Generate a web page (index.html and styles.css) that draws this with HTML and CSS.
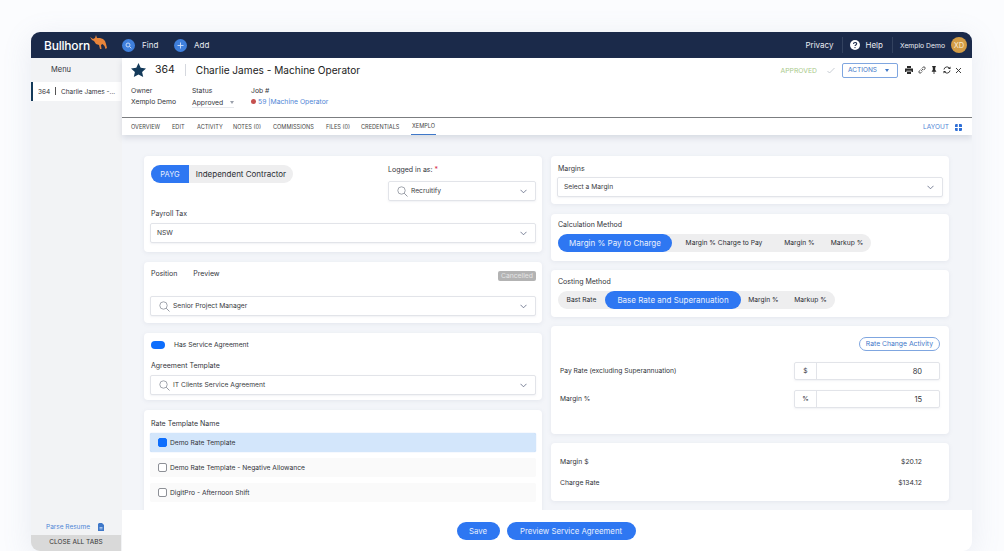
FILE: index.html
```html
<!DOCTYPE html>
<html lang="en">
<head>
    <meta charset="UTF-8">
    <meta name="viewport" content="width=device-width, initial-scale=1.0">
    <title>Charlie James - Machine Operator</title>
    <link rel="stylesheet" href="styles.css">
</head>
<body>
    <div class="window">
        <!-- top bar -->
        <div class="topbar">
            <div class="logo">
                <span>Bullhorn</span>
                <svg width="17" height="15" viewBox="0 0 17 15"><path fill="#e8843a" d="M0 2l3 2 2-1 1-3 1 3 3 0 3 1 2 2 1 3 1 4-1.500 1-1-3-2-2-1.500 1 .5 4-1.500 0-1-4-3-1-2-3-2-1z"/></svg>
            </div>
            <div class="find">
                <span class="round"><svg width="7" height="7" viewBox="0 0 7 7"><circle cx="3" cy="3" r="2" fill="none" stroke="#cfe0fa" stroke-width=".9"/><path d="M4.5 4.5L6.3 6.3" stroke="#cfe0fa" stroke-width=".9"/></svg></span>
                <span>Find</span>
            </div>
            <div class="add">
                <span class="round"><svg width="7" height="7" viewBox="0 0 7 7"><path d="M3.5 .5v6M.5 3.5h6" stroke="#cfe0fa" stroke-width=".9"/></svg></span>
                <span>Add</span>
            </div>
            <div class="topright">
                <span class="privacy">Privacy</span>
                <span class="help">
                    <svg width="10" height="10" viewBox="0 0 10 10"><circle cx="5" cy="5" r="5" fill="#fff"/><path d="M3.5 4c0-2 3.2-2 3.2-.2 0 1.200-1.700 1.100-1.700 2.300" fill="none" stroke="#1b2a4a" stroke-width="1.100"/><circle cx="5" cy="7.600" r=".7" fill="#1b2a4a"/></svg>
                    Help
                </span>
                <span class="user">Xemplo Demo</span>
                <span class="avatar">XD</span>
            </div>
        </div>

        <div class="below">
            <!-- left tabs -->
            <div class="sidebar">
                <div class="menu">Menu</div>
                <div class="opentab">364 <i></i> Charlie James -...</div>
                <div class="parse">
                    Parse Resume
                    <svg width="6" height="8" viewBox="0 0 6 8"><path fill="#3f78c9" d="M0 1l1-1h3l2 2v6H0z"/><path fill="#cfe0fa" d="M1.500 4h3v.7h-3zM1.500 5.500h3v.7h-3z"/></svg>
                </div>
                <div class="closeall">CLOSE ALL TABS</div>
            </div>

            <div class="main">
                <!-- record header -->
                <div class="record">
                    <div class="recordtop">
                        <div class="recordtitle">
                            <svg width="15" height="14" viewBox="0 0 15 14"><path fill="#143a5a" d="M7.500 0l2.200 4.800 5.300.6-3.900 3.500 1.100 5.100-4.700-2.600L2.800 14l1.100-5.100L0 5.400l5.300-.6z"/></svg>
                            <span class="recid">364</span>
                            <span class="recname">Charlie James - Machine Operator</span>
                        </div>
                        <div class="recordactions">
                            <span class="approved">APPROVED</span>
                            <svg class="tick" width="8" height="7" viewBox="0 0 8 7"><path d="M.5 4l2 2L7.500 1" fill="none" stroke="#b9bfc8" stroke-width=".8"/></svg>
                            <span class="actions">ACTIONS <b></b></span>
                            <div class="tools">
                                <svg width="8" height="8" viewBox="0 0 8 8"><path fill="#2a2a2a" d="M2 0h4v2H2zM0 2.500h8v3.500H6.500V4.800h-5V6H0zM2 5.500h4V8H2z"/></svg>
                                <svg width="8" height="8" viewBox="0 0 8 8"><path d="M3.200 4.800L5 3M2.500 3.800L1.200 5.100a1.200 1.200 0 0 0 1.700 1.700L4.200 5.500M3.800 2.500L5.100 1.200a1.200 1.200 0 0 1 1.700 1.700L5.500 4.200" fill="none" stroke="#2a2a2a" stroke-width=".8"/></svg>
                                <svg width="8" height="8" viewBox="0 0 8 8"><path fill="#2a2a2a" d="M2.200 0h3.600v1L5.200 1.500V4l1 1v.7H4.400V8h-.8V5.700H1.800V5l1-1V1.500L2.200 1z"/></svg>
                                <svg width="8" height="8" viewBox="0 0 8 8"><path d="M1 3.500A3 3 0 0 1 6.300 2M7 4.500A3 3 0 0 1 1.700 6" fill="none" stroke="#2a2a2a" stroke-width=".9"/><path fill="#2a2a2a" d="M7.500.5v2.600H4.900zM.5 7.500V4.900h2.600z"/></svg>
                                <svg width="7" height="7" viewBox="0 0 7 7"><path d="M1 1l5 5M6 1L1 6" stroke="#2a2a2a" stroke-width=".9"/></svg>
                            </div>
                        </div>
                    </div>
                    <div class="recordmeta">
                        <div class="meta owner"><span>Owner</span><span>Xemplo Demo</span></div>
                        <div class="meta status"><span>Status</span><span class="statusval">Approved <b></b></span></div>
                        <div class="meta job"><span>Job #</span><span class="joblink"><i></i>59 |Machine Operator</span></div>
                    </div>
                    <div class="tabs">
                        <span class="t1">OVERVIEW</span>
                        <span class="t2">EDIT</span>
                        <span class="t3">ACTIVITY</span>
                        <span class="t4">NOTES (0)</span>
                        <span class="t5">COMMISSIONS</span>
                        <span class="t6">FILES (0)</span>
                        <span class="t7">CREDENTIALS</span>
                        <span class="t8 current">XEMPLO</span>
                        <span class="layout">LAYOUT
                            <svg width="7" height="7" viewBox="0 0 7 7"><path fill="#2f6fd6" d="M0 .8L.8 0h1.900v2.900H0zM4 0h2.200L7 .8v2.100H4zM0 4h2.700v3H.8L0 6.200zM4 4h3v2.200L6.200 7H4z"/></svg>
                        </span>
                    </div>
                </div>

                <!-- form -->
                <div class="formarea">
                    <div class="col left">
                        <div class="card c1">
                            <div class="c1top">
                                <div class="pills big">
                                    <span class="pill on payg">PAYG</span>
                                    <span class="pill">Independent Contractor</span>
                                </div>
                                <div class="loggedin">
                                    <div class="label">Logged in as: <em>*</em></div>
                                    <div class="select">
                                        <svg class="mag" width="11" height="11" viewBox="0 0 11 11"><circle cx="4.500" cy="4.500" r="3.700" fill="none" stroke="#8a8f99" stroke-width=".8"/><path d="M7.200 7.200L10.500 10.500" stroke="#8a8f99" stroke-width=".9"/></svg>
                                        <span>Recruitify</span>
                                        <svg class="chev" width="7" height="5" viewBox="0 0 7 5"><path d="M.5 .8L3.500 3.800 6.500 .8" fill="none" stroke="#5c6480" stroke-width=".8"/></svg>
                                    </div>
                                </div>
                            </div>
                            <div class="label">Payroll Tax</div>
                            <div class="select plain">
                                <span>NSW</span>
                                <svg class="chev" width="7" height="5" viewBox="0 0 7 5"><path d="M.5 .8L3.500 3.800 6.500 .8" fill="none" stroke="#5c6480" stroke-width=".8"/></svg>
                            </div>
                        </div>

                        <div class="card c2">
                            <div class="c2top">
                                <span>Position</span>
                                <span>Preview</span>
                                <span class="cancelled">Cancelled</span>
                            </div>
                            <div class="select">
                                <svg class="mag" width="11" height="11" viewBox="0 0 11 11"><circle cx="4.500" cy="4.500" r="3.700" fill="none" stroke="#8a8f99" stroke-width=".8"/><path d="M7.200 7.200L10.500 10.500" stroke="#8a8f99" stroke-width=".9"/></svg>
                                <span>Senior Project Manager</span>
                                <svg class="chev" width="7" height="5" viewBox="0 0 7 5"><path d="M.5 .8L3.500 3.800 6.500 .8" fill="none" stroke="#5c6480" stroke-width=".8"/></svg>
                            </div>
                        </div>

                        <div class="card c3">
                            <div class="switchrow"><span class="switch"></span>Has Service Agreement</div>
                            <div class="label">Agreement Template</div>
                            <div class="select">
                                <svg class="mag" width="11" height="11" viewBox="0 0 11 11"><circle cx="4.500" cy="4.500" r="3.700" fill="none" stroke="#8a8f99" stroke-width=".8"/><path d="M7.200 7.200L10.500 10.500" stroke="#8a8f99" stroke-width=".9"/></svg>
                                <span>IT Clients Service Agreement</span>
                                <svg class="chev" width="7" height="5" viewBox="0 0 7 5"><path d="M.5 .8L3.500 3.800 6.500 .8" fill="none" stroke="#5c6480" stroke-width=".8"/></svg>
                            </div>
                        </div>

                        <div class="card c4">
                            <div class="label">Rate Template Name</div>
                            <div class="tpl selected"><i></i>Demo Rate Template</div>
                            <div class="tpl"><i></i>Demo Rate Template - Negative Allowance</div>
                            <div class="tpl"><i></i>DigitPro - Afternoon Shift</div>
                        </div>
                    </div>

                    <div class="col right">
                        <div class="card r1">
                            <div class="label">Margins</div>
                            <div class="select plain">
                                <span>Select a Margin</span>
                                <svg class="chev" width="7" height="5" viewBox="0 0 7 5"><path d="M.5 .8L3.500 3.800 6.500 .8" fill="none" stroke="#5c6480" stroke-width=".8"/></svg>
                            </div>
                        </div>
                        <div class="card r2">
                            <div class="label">Calculation Method</div>
                            <div class="pills">
                                <span class="pill on calc1">Margin % Pay to Charge</span>
                                <span class="pill calc2">Margin % Charge to Pay</span>
                                <span class="pill calc3">Margin %</span>
                                <span class="pill calc4">Markup %</span>
                            </div>
                        </div>
                        <div class="card r2">
                            <div class="label">Costing Method</div>
                            <div class="pills">
                                <span class="pill cost1">Bast Rate</span>
                                <span class="pill on cost2">Base Rate and Superanuation</span>
                                <span class="pill cost3">Margin %</span>
                                <span class="pill cost4">Markup %</span>
                            </div>
                        </div>
                        <div class="card r4">
                            <div class="ratebtn"><span>Rate Change Activity</span></div>
                            <div class="raterow">
                                <span>Pay Rate (excluding Superannuation)</span>
                                <div class="unit"><b>$</b><span>80</span></div>
                            </div>
                            <div class="raterow">
                                <span>Margin %</span>
                                <div class="unit"><b>%</b><span>15</span></div>
                            </div>
                        </div>
                        <div class="card r5">
                            <div class="totalrow"><span>Margin $</span><span>$20.12</span></div>
                            <div class="totalrow"><span>Charge Rate</span><span>$134.12</span></div>
                        </div>
                    </div>
                </div>

                <!-- footer buttons -->
                <div class="footer">
                    <span class="btn save">Save</span>
                    <span class="btn preview">Preview Service Agreement</span>
                </div>
            </div>
        </div>
    </div>
</body>
</html>
```

FILE: styles.css
```css
*{
    margin:0;
    padding:0;
    box-sizing:border-box;
}
html,body{
    width:100%;
    height:100%;
    overflow:hidden;
}
body{
    background:#fbfcfe;
    font-family:"Inter","Liberation Sans",sans-serif;
    color:#33353b;
    font-size:7px;
    padding:32px 32px 0 31px;
}
i,em{
    font-style:normal;
}

.window{
    width:941px;
    height:519px;
    display:flex;
    flex-direction:column;
    border-radius:9px;
    overflow:hidden;
    background:#f3f5f9;
    box-shadow:0 6px 30px rgba(120,135,170,.14);
}

/* top bar */
.topbar{
    height:26px;
    flex:none;
    background:#1b2a4a;
    color:#e9ecf2;
    display:flex;
    align-items:center;
    padding-left:13px;
    font-size:8px;
}
.logo{
    width:78px;
    display:flex;
    align-items:center;
    font-size:12px;
    font-weight:500;
    color:#fff;
    letter-spacing:-.2px;
}
.logo svg{
    margin-top:-5px;
}
.round{
    width:13px;
    height:13px;
    border-radius:50%;
    background:#3f7fdc;
    display:flex;
    align-items:center;
    justify-content:center;
}
.find,.add{
    display:flex;
    align-items:center;
    gap:7px;
}
.find{
    width:52px;
}
.topright{
    margin-left:auto;
    display:flex;
    align-items:center;
    height:100%;
    padding-right:5px;
}
.privacy{
    padding-right:9px;
    border-right:1px solid #33425f;
    height:16px;
    line-height:16px;
}
.help{
    display:flex;
    align-items:center;
    gap:5px;
    padding:0 9px 0 7px;
    height:16px;
    border-right:1px solid #33425f;
}
.user{
    padding-left:7px;
    font-size:6.8px;
}
.avatar{
    width:16px;
    height:16px;
    border-radius:50%;
    background:#d39c45;
    color:#f7ead2;
    margin-left:6px;
    display:flex;
    align-items:center;
    justify-content:center;
    font-size:7.5px;
}

.below{
    flex:1;
    display:flex;
    min-height:0;
}

/* left tabs */
.sidebar{
    width:91px;
    flex:none;
    background:#f2f3f5;
    display:flex;
    flex-direction:column;
}
.menu{
    height:24px;
    padding-left:20px;
    line-height:23px;
    font-size:7.5px;
}
.opentab{
    height:19px;
    width:90px;
    background:#fff;
    border-left:2px solid #143a5a;
    padding-left:5px;
    line-height:20px;
    font-size:6.5px;
    white-space:nowrap;
}
.opentab i{
    display:inline-block;
    width:1px;
    height:8px;
    background:#555;
    margin:0 3px;
    vertical-align:-1px;
}
.parse{
    margin-top:auto;
    height:18px;
    padding:2px 0 0 15px;
    color:#4f86d6;
    font-size:6.5px;
    display:flex;
    align-items:center;
    gap:8px;
}
.closeall{
    height:16px;
    background:#d9d9d9;
    text-align:center;
    line-height:15px;
    font-size:6.5px;
    color:#333;
    width:90px;
}

.main{
    flex:1;
    min-width:0;
    display:flex;
    flex-direction:column;
}

/* record header */
.record{
    height:77px;
    flex:none;
    background:#fff;
    box-shadow:0 3px 6px rgba(90,100,130,.18);
    position:relative;
    z-index:1;
    display:flex;
    flex-direction:column;
}
.recordtop{
    height:25px;
    display:flex;
    justify-content:space-between;
    align-items:center;
    padding:0 10px 0 9px;
}
.recordtitle{
    display:flex;
    align-items:center;
    font-size:10.100px;
    color:#222;
}
.recid{
    margin-left:9px;
    padding-right:10px;
    border-right:1px solid #d5d8de;
    height:12px;
    line-height:12px;
    font-size:10.5px;
}
.recname{
    margin-left:10px;
}
.recordactions{
    display:flex;
    align-items:center;
}
.approved{
    color:#a8c98a;
    font-size:6.8px;
}
.tick{
    margin-left:10px;
}
.actions{
    margin-left:7px;
    width:56px;
    height:15px;
    border:1px solid #7fa6e0;
    border-radius:2px;
    color:#3f78c9;
    font-size:6.5px;
    padding-left:5px;
    display:flex;
    align-items:center;
    gap:8px;
}
.actions b,.statusval b{
    width:0;
    height:0;
    border:2.500px solid transparent;
    border-top:3px solid #3f78c9;
    border-bottom:0;
}
.tools{
    display:flex;
    align-items:center;
    gap:4.500px;
    margin-left:7px;
}
.recordmeta{
    display:flex;
    height:36px;
    padding:4px 0 0 9px;
    font-size:6.8px;
}
.meta{
    display:flex;
    flex-direction:column;
    gap:2px;
    line-height:9px;
}
.owner{
    width:61px;
}
.status{
    width:59px;
}
.statusval{
    border-bottom:1px solid #e6e8ec;
    height:11px;
    width:42px;
    display:flex;
    align-items:center;
    gap:7px;
}
.statusval b{
    border-top-color:#9aa0aa;
}
.joblink{
    color:#4f86d6;
}
.joblink i{
    display:inline-block;
    width:5px;
    height:5px;
    background:#c5504f;
    border-radius:50%;
    margin-right:2px;
}
.tabs{
    flex:1;
    border-top:1px solid #7b7d80;
    display:flex;
    align-items:center;
    padding:1px 0 0 9px;
    font-size:5.6px;
    color:#444;
}
.t1{ width:41px; }
.t2{ width:25px; }
.t3{ width:36px; }
.t4{ width:40px; }
.t5{ width:53px; }
.t6{ width:35px; }
.t7{ width:50px; }
.current{
    align-self:stretch;
    line-height:15px;
    border-bottom:1.500px solid #3f78c9;
    padding:0 1px;
}
.layout{
    margin-left:auto;
    color:#4f86d6;
    font-size:6.5px;
    display:flex;
    align-items:center;
    gap:6px;
    padding-right:10px;
}

/* form */
.formarea{
    flex:1;
    min-height:0;
    overflow:hidden;
    display:flex;
    gap:9px;
    padding:21px 0 0 22px;
}
.col{
    width:398px;
    flex:none;
    display:flex;
    flex-direction:column;
}
.left{
    gap:10px;
}
.right{
    gap:9px;
}
.card{
    background:#fff;
    border-radius:4px;
    box-shadow:0 1px 4px rgba(120,130,160,.12);
    padding:0 6px;
    flex:none;
}
.label{
    font-size:7px;
    line-height:9px;
    padding-left:1px;
}
.label em{
    color:#d8324a;
}
.select{
    height:20px;
    border:1px solid #e2e4e9;
    border-radius:2px;
    display:flex;
    align-items:center;
    padding:0 8px;
    box-shadow:0 1px 2px rgba(120,130,160,.1);
    font-size:6.7px;
    gap:3px;
    background:#fff;
    color:#3a3c42;
}
.select.plain{
    padding-left:6px;
}
.chev{
    margin-left:auto;
}
.pills{
    display:inline-flex;
    height:18px;
    margin-left:1px;
    background:#eeeeef;
    border-radius:9px;
    align-items:center;
    font-size:6.7px;
    color:#2b2d33;
    vertical-align:top;
}
.pill{
    height:18px;
    display:flex;
    align-items:center;
    justify-content:center;
    white-space:nowrap;
}
.pill.on{
    background:#2e77f2;
    color:#e9f0fd;
    border-radius:9px;
    font-size:8px;
}

.c1{
    height:96px;
    padding-top:9px;
}
.c1top{
    display:flex;
    justify-content:space-between;
    height:40px;
    margin-bottom:4px;
}
.big{
    font-size:8px;
    width:142px;
}
.big .on{
    font-size:7.5px;
}
.payg{
    width:38px;
    border-radius:9px 0 0 9px !important;
}
.big .pill:last-child{
    flex:1;
}
.loggedin{
    width:148px;
}
.loggedin .label{
    margin-bottom:7px;
    padding-left:0;
}
.c1 .label + .select.plain{
    margin-top:5px;
}

.c2{
    height:61px;
    padding-top:5px;
}
.c2top{
    display:flex;
    align-items:center;
    gap:16px;
    height:12px;
    margin-bottom:17px;
    padding-left:1px;
}
.cancelled{
    margin-left:auto;
    background:#b3b3b3;
    color:#e4e4e4;
    border-radius:2px;
    height:10px;
    line-height:10px;
    padding:0 3px;
    font-size:6.8px;
    margin-top:5px;
}

.c3{
    height:67px;
    padding-top:7px;
}
.switchrow{
    display:flex;
    align-items:center;
    gap:9px;
    height:9px;
    margin-bottom:12px;
    padding-left:1px;
    font-size:6.7px;
}
.switch{
    width:14px;
    height:8px;
    border-radius:4px;
    background:#0d6efd;
}
.c3 .label{
    margin-bottom:5px;
}

.c4{
    height:110px;
    padding-top:9px;
}
.c4 .label{
    margin-bottom:5px;
}
.tpl{
    height:19px;
    margin-bottom:6px;
    background:#fafafa;
    display:flex;
    align-items:center;
    padding-left:8px;
    gap:3px;
    font-size:6.7px;
    border-radius:2px;
}
.tpl i{
    width:9px;
    height:9px;
    border:1px solid #8d9096;
    border-radius:2px;
    background:#fff;
}
.selected{
    background:#d3e6fb;
    box-shadow:0 0 1px #9fc1ee;
}
.selected i{
    background:#0d6efd;
    border-color:#0d6efd;
}

.r1{
    height:48px;
    padding-top:8px;
    margin-bottom:1px;
}
.r1 .label{
    margin-bottom:4px;
}
.r2{
    height:47px;
    padding-top:6px;
}
.r2 + .r2{
    padding-top:7px;
}
.r2 .label{
    margin-bottom:5px;
}
.calc1{ width:114px; }
.calc2{ width:104px; }
.calc3{ width:47px; }
.calc4{ width:48px; }
.cost1{ width:47px; }
.cost2{ width:136px; }
.cost3{ width:45px; }
.cost4{ width:49px; }

.r4{
    height:108px;
    padding:11px 9px 0 9px;
}
.ratebtn{
    display:flex;
    justify-content:flex-end;
    margin-bottom:11px;
}
.ratebtn span{
    border:1px solid #7fa6e0;
    border-radius:7px;
    height:14px;
    line-height:12px;
    padding:0 6px;
    color:#3f78c9;
    font-size:6.8px;
}
.raterow{
    display:flex;
    justify-content:space-between;
    align-items:center;
    height:18px;
    margin-bottom:10px;
    font-size:6.7px;
}
.unit{
    width:146px;
    height:18px;
    border:1px solid #e2e4e9;
    border-radius:2px;
    display:flex;
    align-items:center;
    box-shadow:0 1px 2px rgba(120,130,160,.1);
}
.unit b{
    width:22px;
    height:100%;
    border-right:1px solid #e2e4e9;
    font-weight:400;
    display:flex;
    align-items:center;
    justify-content:center;
}
.unit span{
    flex:1;
    text-align:right;
    padding-right:17px;
    font-size:7.500px;
}

.r5{
    height:58px;
    padding:14px 27px 0 9px;
}
.totalrow{
    display:flex;
    justify-content:space-between;
    height:21px;
    line-height:9px;
    font-size:6.8px;
}

.footer{
    height:41px;
    flex:none;
    background:#fff;
    display:flex;
    justify-content:center;
    align-items:center;
    gap:7px;
    padding-right:2px;
}
.btn{
    height:18px;
    border-radius:9px;
    background:#2e77f2;
    color:#e6eefc;
    font-size:7.800px;
    display:flex;
    align-items:center;
    justify-content:center;
}
.save{
    width:43px;
}
.preview{
    width:129px;
}
```
